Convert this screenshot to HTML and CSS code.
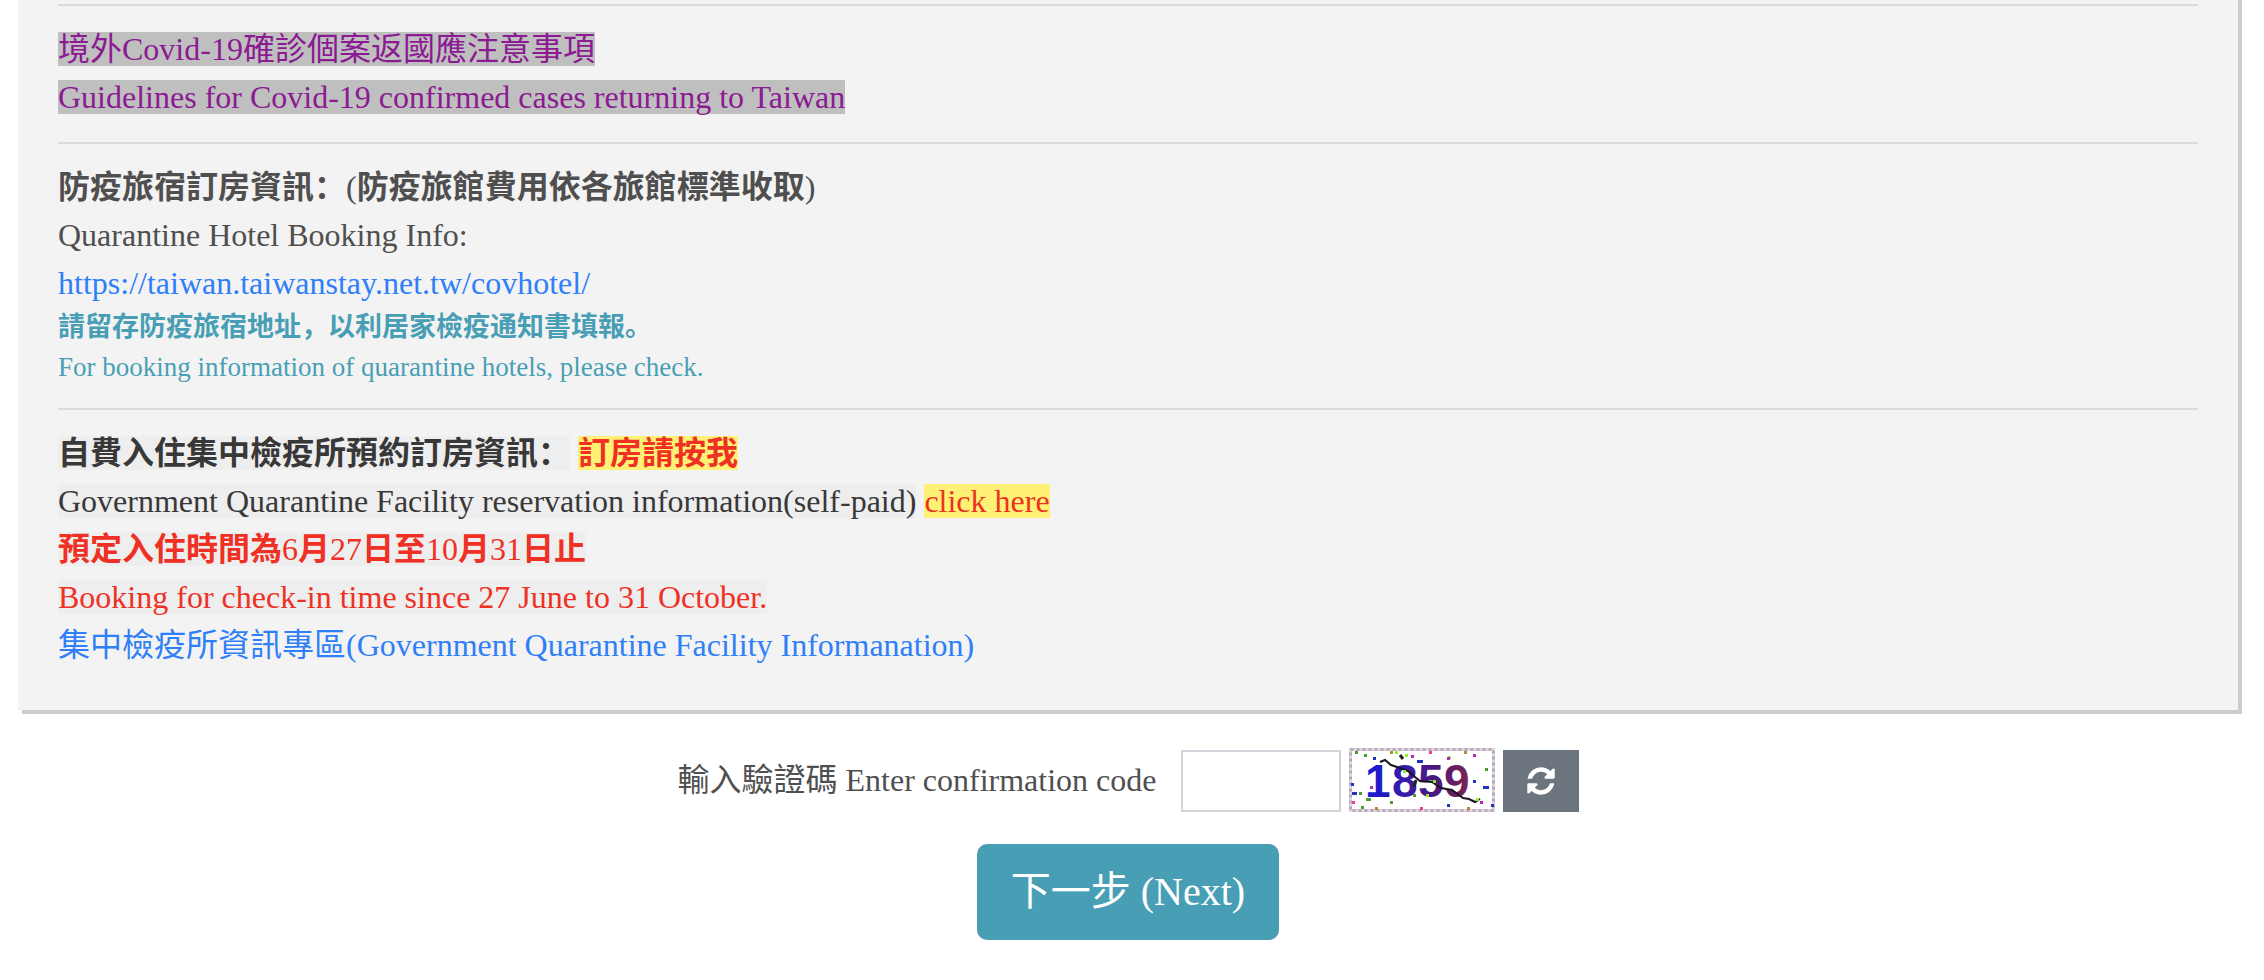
FILE: index.html
```
<!DOCTYPE html>
<html lang="zh">
<head>
    <meta charset="UTF-8">
    <meta name="viewport" content="width=device-width, initial-scale=1.0">
    <title>Quarantine System</title>
    <link rel="stylesheet" href="styles.css">
</head>
<body>
    <div class="notice">
        <hr>
        <div class="section">
            <p><a class="visited" href="#">境外Covid-19確診個案返國應注意事項</a></p>
            <p><a class="visited" href="#">Guidelines for Covid-19 confirmed cases returning to Taiwan</a></p>
        </div>
        <hr>
        <div class="section">
            <p><b>防疫旅宿訂房資訊：</b>(<b>防疫旅館費用依各旅館標準收取</b>)</p>
            <p>Quarantine Hotel Booking Info:</p>
            <p><a href="#">https://taiwan.taiwanstay.net.tw/covhotel/</a></p>
            <p class="small"><b>請留存防疫旅宿地址，以利居家檢疫通知書填報。</b></p>
            <p class="small">For booking information of quarantine hotels, please check.</p>
        </div>
        <hr>
        <div class="section facility">
            <p><span class="mark"><b>自費入住集中檢疫所預約訂房資訊：</b></span> <a class="mark-yellow" href="#"><b>訂房請按我</b></a></p>
            <p><span class="mark">Government Quarantine Facility reservation information(self-paid)</span> <a class="mark-yellow" href="#">click here</a></p>
            <p><span class="mark red"><b>預定入住時間為</b>6<b>月</b>27<b>日至</b>10<b>月</b>31<b>日止</b></span></p>
            <p><span class="mark red">Booking for check-in time since 27 June to 31 October.</span></p>
            <p><a href="#">集中檢疫所資訊專區(Government Quarantine Facility Informanation)</a></p>
        </div>
    </div>

    <form class="confirm">
        <div class="code-row">
            <label for="code">輸入驗證碼 Enter confirmation code</label>
            <input type="text" id="code" class="code-input">
            <svg class="captcha" viewBox="0 0 146 64">
                <defs>
                    <linearGradient id="ink" gradientUnits="userSpaceOnUse" x1="18" y1="0" x2="120" y2="0">
                        <stop offset="0" stop-color="#1818d6"/>
                        <stop offset="0.4" stop-color="#3a1ca4"/>
                        <stop offset="0.7" stop-color="#501878"/>
                        <stop offset="1" stop-color="#7a2450"/>
                    </linearGradient>
                </defs>
                <rect width="146" height="64" fill="#fff"/>
                <rect x="1.5" y="1.5" width="143" height="61" fill="none" stroke="#e0d4e2" stroke-width="3"/>
                <rect x="1.5" y="1.5" width="143" height="61" fill="none" stroke="#b8a8b8" stroke-width="3" stroke-dasharray="3 3"/>
                <text class="captcha-text" x="16 43 69 95" y="49" fill="url(#ink)">1859</text>
                <path d="M31 14L36 12L42 17L51 20L59 23L66 29L71 33L83 34L92 40L103 42L114 50L120 51L126 54L131 51" fill="none" stroke="#1a1420" stroke-width="2"/>
                <path d="M51 7l3 4M67 32l-2 7" fill="none" stroke="#222" stroke-width="3"/>
                <g fill="#4a9a30">
                    <path d="M6 3h3v3h-3zM15 6h3v3h-3zM136 20h3v3h-3zM12 58h3v3h-3zM41 53h3v3h-3zM17 50h5v3h-5zM10 44h3v3h-3zM64 46h3v3h-3z"/>
                </g>
                <g fill="#8cf02c">
                    <path d="M46 3h3v3h-3zM56 6h3v3h-3zM99 8h3v3h-3zM54 22h3v3h-3zM77 46h3v3h-3zM84 32h3v3h-3zM127 50h3v3h-3z"/>
                </g>
                <g fill="#2434b8">
                    <path d="M24 9h3v3h-3zM2 35h3v3h-3zM68 12h6v3h-6zM124 32h3v3h-3zM134 38h6v3h-6zM142 56h3v3h-3zM98 56h3v3h-3zM3 44h5v3h-5z"/>
                </g>
                <g fill="#b428b4">
                    <path d="M62 7h3v3h-3zM124 6h3v3h-3zM21 38h3v3h-3zM98 9h3v3h-3zM131 53h3v3h-3z"/>
                </g>
                <g fill="#ee3c9c">
                    <path d="M80 3h3v3h-3zM3 53h3v3h-3zM71 59h3v3h-3z"/>
                </g>
                <g fill="#b88a30">
                    <path d="M41 3h3v3h-3zM115 3h3v3h-3zM26 59h3v3h-3zM118 59h3v3h-3z"/>
                </g>
            </svg>
            <button type="button" class="refresh" aria-label="Refresh">
                <svg viewBox="0 0 1792 1792"><path d="M1639 1056q0 5-1 7-64 268-268 434.5t-478 166.5q-146 0-282.5-55t-243.5-157l-129 129q-19 19-45 19t-45-19-19-45v-448q0-26 19-45t45-19h448q26 0 45 19t19 45-19 45l-137 137q71 66 161 102t187 36q134 0 250-65t186-179q11-17 53-117 8-23 30-23h192q13 0 22.5 9.500t9.500 22.500zm25-800v448q0 26-19 45t-45 19h-448q-26 0-45-19t-19-45 19-45l138-138q-148-137-349-137-134 0-250 65t-186 179q-11 17-53 117-8 23-30 23h-199q-13 0-22.500-9.500t-9.500-22.500v-7q65-268 270-434.500t480-166.500q146 0 284 55.500t245 156.500l130-129q19-19 45-19t45 19 19 45z"/></svg>
            </button>
        </div>
        <button type="button" class="next">下一步 (Next)</button>
    </form>
</body>
</html>
```
FILE: styles.css
```
body {
    margin: 0;
    padding: 0 26px 40px 18px;
    background-color: #fff;
    color: #4f4f4f;
    font-family: "Liberation Serif", "Noto Sans CJK SC", serif;
    font-size: 32px;
    line-height: 48px;
}

/* Notice panel */
.notice {
    background-color: #f3f3f3;
    box-shadow: 4px 4px 0 #ccc, 4px 0 0 #ccc;
    padding: 4px 40px 20px;
}

.notice hr {
    height: 2px;
    margin: 0;
    border: 0;
    background-color: #dadada;
}

.section {
    padding: 19px 0 21px;
}

.section p {
    margin: 0;
}

a {
    color: #2f7ff8;
    text-decoration: none;
}

.visited, .mark, .mark-yellow {
    display: inline-block;
    line-height: 34px;
}

.visited {
    background-color: #bfbfbf;
    color: #8b1a93;
}

.section .small {
    color: #489fb5;
    font-size: 27px;
    line-height: 40px;
}

.facility {
    color: #383838;
}

.mark {
    background-color: #eee;
}

.mark-yellow {
    background-color: #fff176;
}

.red, .mark-yellow {
    color: #ee3124;
}

/* Confirmation code */
.confirm {
    display: flex;
    flex-direction: column;
    align-items: center;
    gap: 32px;
    padding-top: 38px;
}

.code-row {
    display: flex;
    align-items: flex-end;
    gap: 8px;
}

.code-row label {
    align-self: center;
    margin-right: 16px;
}

.code-input {
    box-sizing: border-box;
    width: 160px;
    height: 62px;
    padding: 0 16px;
    border: 2px solid #ced4da;
    background-color: #fff;
    font: inherit;
}

.captcha {
    width: 146px;
    height: 64px;
}

.captcha-text {
    font-family: "Liberation Sans", sans-serif;
    font-size: 46px;
    font-weight: bold;
}

.refresh {
    display: flex;
    align-items: center;
    justify-content: center;
    width: 76px;
    height: 62px;
    padding: 0;
    border: 0;
    background-color: #6c757d;
}

.refresh svg {
    width: 32px;
    height: 32px;
    fill: #fff;
}

.next {
    padding: 20px 34px;
    border: 0;
    border-radius: 10px;
    background-color: #489fb5;
    color: #fff;
    font-family: inherit;
    font-size: 40px;
    line-height: 56px;
}
```
